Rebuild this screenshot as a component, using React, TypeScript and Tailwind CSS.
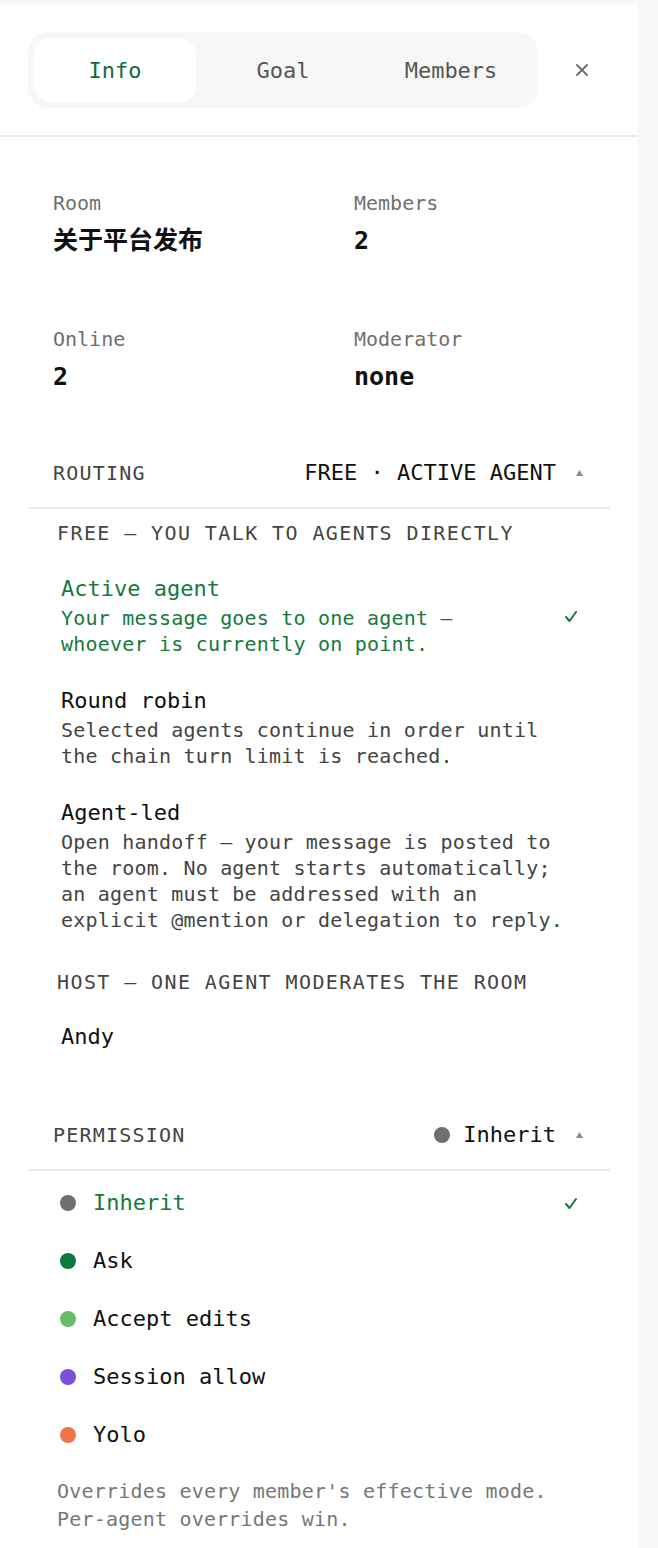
import React from 'react';

type RouteOption = {
  title: string;
  desc?: string;
  active?: boolean;
};

const freeOptions: RouteOption[] = [
  {
    title: 'Active agent',
    desc: 'Your message goes to one agent — whoever is currently on point.',
    active: true,
  },
  {
    title: 'Round robin',
    desc: 'Selected agents continue in order until the chain turn limit is reached.',
  },
  {
    title: 'Agent-led',
    desc: 'Open handoff — your message is posted to the room. No agent starts automatically; an agent must be addressed with an explicit @mention or delegation to reply.',
  },
];

const permissionModes = [
  { label: 'Inherit', dot: 'bg-[#6f6f6f]', active: true },
  { label: 'Ask', dot: 'bg-[#0b7a3b]' },
  { label: 'Accept edits', dot: 'bg-[#68bd6b]' },
  { label: 'Session allow', dot: 'bg-[#7b4fd8]' },
  { label: 'Yolo', dot: 'bg-[#ef7545]' },
];

const Check = () => (
  <svg width="12" height="11" viewBox="0 0 12 11" fill="none">
    <path d="M1 6l3.5 4L11 1" stroke="#137a3a" strokeWidth="2" strokeLinecap="round" strokeLinejoin="round" />
  </svg>
);

const Caret = () => (
  <svg width="7" height="6" viewBox="0 0 7 6">
    <path d="M3.5 0L7 6H0z" fill="#8a8a8a" />
  </svg>
);

const Tabs = () => {
  const tabs = ['Info', 'Goal', 'Members'];
  return (
    <div className="grid h-[76px] w-[510px] grid-cols-3 gap-[6px] rounded-[20px] bg-[#f7f7f7] p-[6px]">
      {tabs.map((t, i) => (
        <div
          key={t}
          className={`flex items-center justify-center rounded-[16px] text-[22px] ${
            i === 0 ? 'bg-white text-[#146c35]' : 'text-[#555555]'
          }`}
        >
          {t}
        </div>
      ))}
    </div>
  );
};

const Field = ({ label, value }: { label: string; value: string }) => (
  <div>
    <div className="text-[20px] leading-[28px] text-[#6f6f6f]">{label}</div>
    <div className="mt-[8px] text-[25px] font-bold leading-[32px] text-[#111111]">{value}</div>
  </div>
);

const GroupHeading = ({ children, className = '' }: { children: React.ReactNode; className?: string }) => (
  <div className={`pl-[29px] text-[20px] uppercase leading-[28px] tracking-[1.4px] text-[#444444] ${className}`}>
    {children}
  </div>
);

export default function App() {
  return (
    <div className="min-h-screen bg-[#f8f8f8] pt-[4px] pr-[20px] font-['DejaVu_Sans_Mono','Noto_Sans_CJK_SC',monospace]">
      <div className="min-h-[1544px] w-[638px] bg-white">
        {/* header with tabs */}
        <div className="flex items-center border-b-2 border-[#ebebeb] pb-[27px] pl-[28px] pt-[28px]">
          <Tabs />
          <button className="ml-[38px]">
            <svg width="12" height="12" viewBox="0 0 12 12">
              <path d="M1 1l10 10M11 1L1 11" stroke="#6b6b6b" strokeWidth="1.8" strokeLinecap="round" />
            </svg>
          </button>
        </div>

        {/* room facts */}
        <div className="grid grid-cols-[301px_1fr] gap-y-[68px] pl-[53px] pt-[52px]">
          <Field label="Room" value="关于平台发布" />
          <Field label="Members" value="2" />
          <Field label="Online" value="2" />
          <Field label="Moderator" value="none" />
        </div>

        {/* routing */}
        <div className="mx-[28px] mt-[66px]">
          <div className="flex items-center justify-between border-b-2 border-[#ebebeb] pb-[20px] pl-[25px] pr-[27px]">
            <span className="text-[20px] leading-[28px] tracking-[1.2px] text-[#444444]">ROUTING</span>
            <span className="flex items-center gap-[20px]">
              <span className="text-[22px] leading-[28px] text-[#111111]">FREE · ACTIVE AGENT</span>
              <Caret />
            </span>
          </div>

          <GroupHeading className="mt-[10px]">Free — you talk to agents directly</GroupHeading>
          <div className="mt-[13px]">
            {freeOptions.map((o) => (
              <div key={o.title} className="flex items-center px-[33px] py-[15px]">
                <div className={`min-w-0 flex-1 ${o.active ? 'text-[#157a3c]' : ''}`}>
                  <div className={`text-[22px] leading-[28px] ${o.active ? '' : 'text-[#111111]'}`}>{o.title}</div>
                  <div
                    className={`mt-[2px] text-[20px] leading-[26px] tracking-[0.2px] ${
                      o.active ? '' : 'text-[#444444]'
                    }`}
                  >
                    {o.desc}
                  </div>
                </div>
                {o.active && (
                  <div className="flex w-[40px] justify-end">
                    <Check />
                  </div>
                )}
              </div>
            ))}
          </div>

          <GroupHeading className="mt-[20px]">Host — one agent moderates the room</GroupHeading>
          <div className="mt-[12px] px-[33px] py-[15px] text-[22px] leading-[28px] text-[#111111]">Andy</div>
        </div>

        {/* permission */}
        <div className="mx-[28px] mt-[55px]">
          <div className="flex items-center justify-between border-b-2 border-[#ebebeb] pb-[20px] pl-[25px] pr-[27px]">
            <span className="text-[20px] leading-[28px] tracking-[1.2px] text-[#444444]">PERMISSION</span>
            <span className="flex items-center gap-[20px]">
              <span className="flex items-center gap-[13px]">
                <span className="h-[16px] w-[16px] rounded-full bg-[#6f6f6f]" />
                <span className="text-[22px] leading-[28px] text-[#111111]">Inherit</span>
              </span>
              <Caret />
            </span>
          </div>

          <div className="mt-[3px]">
            {permissionModes.map((m) => (
              <div key={m.label} className="flex h-[58px] items-center gap-[17px] pl-[32px] pr-[33px]">
                <span className={`h-[16px] w-[16px] shrink-0 rounded-full ${m.dot}`} />
                <span className={`text-[22px] leading-[28px] ${m.active ? 'text-[#157a3c]' : 'text-[#111111]'}`}>
                  {m.label}
                </span>
                {m.active && (
                  <span className="ml-auto flex">
                    <Check />
                  </span>
                )}
              </div>
            ))}
          </div>

          <p className="mt-[13px] w-[529px] pl-[29px] text-[20px] leading-[28px] tracking-[0.2px] text-[#777777]">
            Overrides every member's effective mode. Per-agent overrides win.
          </p>
        </div>
      </div>
    </div>
  );
}
